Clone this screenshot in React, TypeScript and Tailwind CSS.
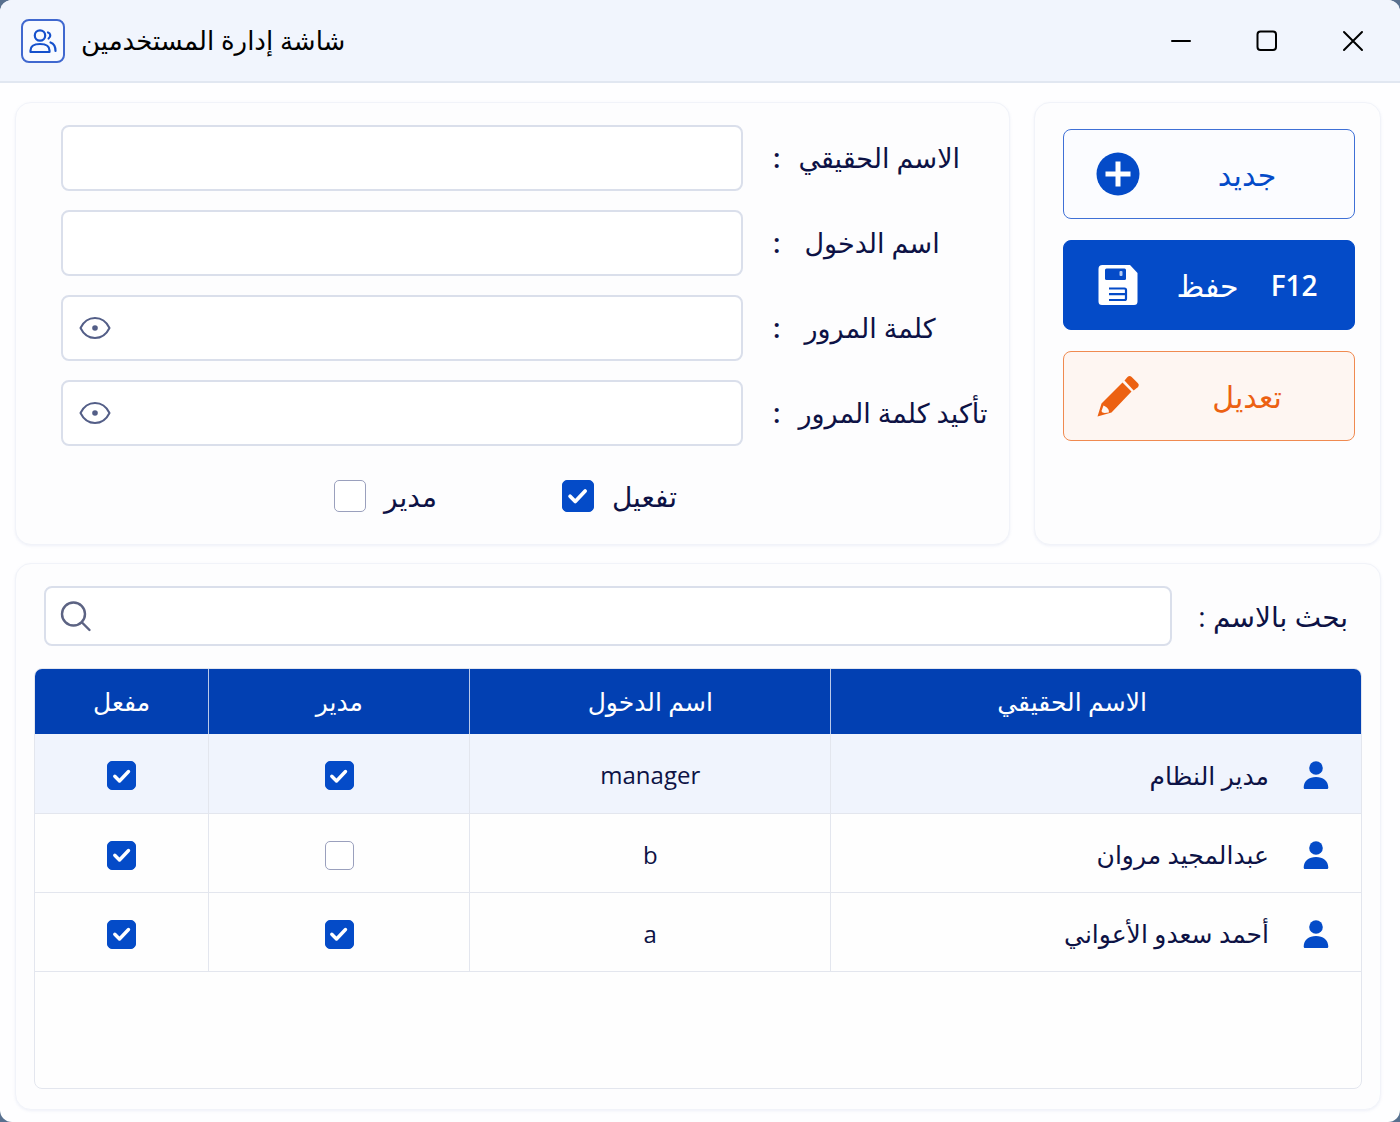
import { useState, type ReactNode } from "react";
import clsx from "clsx";

interface User {
    id: number;
    name: string;
    login: string;
    admin: boolean;
    active: boolean;
}

const initialUsers: User[] = [
    { id: 1, name: "مدير النظام", login: "manager", admin: true, active: true },
    { id: 2, name: "عبدالمجيد مروان", login: "b", admin: false, active: true },
    { id: 3, name: "أحمد سعدو الأعواني", login: "a", admin: true, active: true },
];

const fields = [
    { id: "realName", label: "الاسم الحقيقي", password: false, gap: "gap-[18px]" },
    { id: "loginName", label: "اسم الدخول", password: false, gap: "gap-6" },
    { id: "password", label: "كلمة المرور", password: true, gap: "gap-6" },
    { id: "confirm", label: "تأكيد كلمة المرور", password: true, gap: "gap-[18px]" },
];

function UsersLogo() {
    return (
        <svg viewBox="0 0 28 26" className="h-[26px] w-7" fill="none" stroke="#1550cc" strokeWidth="2.200" strokeLinecap="round" strokeLinejoin="round">
            <circle cx="11" cy="7.500" r="5.200" />
            <path d="M1.500 24v-1.500c0-4.500 3.800-6.500 9.500-6.500s9.500 2 9.500 6.500v1.500z" />
            <path d="M19 4.500c2.600 .8 3.200 4 .6 6" />
            <path d="M21.500 14.500c3.500 1.200 5 4 5 8.500" />
        </svg>
    );
}

function PlusIcon() {
    return (
        <svg viewBox="0 0 44 44" className="size-11">
            <circle cx="22" cy="22" r="21.500" fill="#044bc8" />
            <path d="M22 12v20M12 22h20" stroke="#fff" strokeWidth="5" strokeLinecap="square" strokeLinejoin="round" />
        </svg>
    );
}

function SaveIcon() {
    return (
        <svg viewBox="0 0 44 44" className="size-11">
            <path d="M6.500 2H34l7.500 8v28.500a3.500 3.500 0 0 1-3.500 3.500H6a3.500 3.500 0 0 1-3.500-3.500V6a4 4 0 0 1 4-4z" fill="#fff" />
            <rect x="9" y="5.500" width="21" height="11.500" rx="1.500" fill="#044bc8" />
            <rect x="23.500" y="8" width="3" height="5" rx="1" fill="#b5cdf3" />
            <path d="M13 25.500h15.500q1.500 0 1.500 1.500v8.500q0 1.500-1.500 1.500H13M13 31.200h17" fill="none" stroke="#044bc8" strokeWidth="2.200" />
        </svg>
    );
}

function PencilIcon() {
    return (
        <svg viewBox="0 0 44 44" className="size-11" fill="#ec6112">
            <path d="M26.500 8.500 35.500 17.500 15.500 38.500 1.500 42.500 5.500 29.500zM7.500 31.500 5.500 37C6 39 8 39.500 12.800 38.500 13.500 36 11.500 33 7.500 31.500z" fillRule="evenodd" />
            <path d="m28.500 6.500 3-3.500a3 3 0 0 1 4.200 0l6 6a3 3 0 0 1 0 4.200l-4 3.300z" />
        </svg>
    );
}

function EyeIcon() {
    return (
        <svg viewBox="0 0 32 24" className="h-6 w-8" fill="none" stroke="#535e87" strokeWidth="2" strokeLinejoin="round">
            <path d="M1.500 12C8-1.300 24-1.300 30.500 12 24 25.300 8 25.300 1.500 12z" />
            <circle cx="16" cy="12" r="2.800" fill="#535e87" stroke="none" />
        </svg>
    );
}

function SearchIcon() {
    return (
        <svg viewBox="0 0 32 32" className="size-8" fill="none" stroke="#5c6383" strokeWidth="2.400" strokeLinecap="round">
            <circle cx="13.500" cy="14" r="11.500" />
            <path d="m22 22.500 7.500 7.500" />
        </svg>
    );
}

function PersonIcon() {
    return (
        <svg viewBox="0 0 26 28" className="h-7 w-[26px] shrink-0" fill="#044bc8">
            <circle cx="13" cy="7" r="6.800" />
            <path d="M.7 26.500C.7 20 6 16 13 16s12.300 4 12.300 10.500c0 .9-.4 1.500-1.300 1.500H2c-.9 0-1.300-.6-1.300-1.500z" />
        </svg>
    );
}

interface CheckBoxProps {
    checked: boolean;
    onChange: () => void;
    large?: boolean;
    label?: string;
}

function CheckBox({ checked, onChange, large = false, label }: CheckBoxProps) {
    return (
        <span className={clsx("inline-grid place-items-center align-middle", large ? "size-8" : "size-[29px]")}>
            <input
                type="checkbox"
                checked={checked}
                onChange={onChange}
                aria-label={label}
                className="col-start-1 row-start-1 size-full cursor-pointer appearance-none rounded-[5px] border border-[#9aa0bd] bg-white checked:border-[#044bc8] checked:bg-[#044bc8]"
            />
            {checked && (
                <svg viewBox="0 0 20 20" className={clsx("pointer-events-none col-start-1 row-start-1", large ? "size-[22px]" : "size-5")} fill="none" stroke="#fff" strokeWidth="3.400" strokeLinecap="round" strokeLinejoin="round">
                    <path d="m2.800 10.200 4.700 4.800 9-9.500" />
                </svg>
            )}
        </span>
    );
}

function ActionButton({ icon, className, children }: { icon: ReactNode; className: string; children: ReactNode }) {
    return (
        <button type="button" className={clsx("flex h-[90px] items-center rounded-lg border pl-8 text-[30px]", className)}>
            <span className="flex flex-1 items-center justify-center gap-8">{children}</span>
            {icon}
        </button>
    );
}

const card = "rounded-2xl border border-[#f1f3f9] bg-[#fdfdfe] shadow-[0_1px_3px_rgba(100,120,190,0.1)]";
const input = "w-full rounded-lg border-2 border-[#dadfeb] bg-white px-4 text-2xl outline-none focus:border-[#044bc8]";

export default function App() {
    const [users, setUsers] = useState(initialUsers);
    const [active, setActive] = useState(true);
    const [admin, setAdmin] = useState(false);
    const [visible, setVisible] = useState<Record<string, boolean>>({});

    const toggle = (id: number, key: "admin" | "active") => {
        setUsers((prev) => prev.map((u) => (u.id === id ? { ...u, [key]: !u[key] } : u)));
    };

    return (
        <div className="min-h-screen bg-[#58708f] font-['Open_Sans','DejaVu_Sans',sans-serif] text-[#0d1245]">
            <div className="flex min-h-screen flex-col overflow-hidden rounded-xl bg-[#fefeff]">
                <header className="flex h-[83px] items-center border-b-2 border-[#e1e7f1] bg-[#f1f5fd] pr-[34px] pl-[21px]">
                    <span className="flex size-11 items-center justify-center rounded-lg border-2 border-[#4068cf] bg-[#f8faff]">
                        <UsersLogo />
                    </span>
                    <h1 dir="rtl" className="ml-4 text-[26px] font-medium text-black">شاشة إدارة المستخدمين</h1>
                    <div className="ml-auto flex gap-[60px] text-black">
                        <button type="button" aria-label="تصغير">
                            <svg viewBox="0 0 26 26" className="size-[26px]" stroke="currentColor" strokeWidth="2" strokeLinecap="round">
                                <path d="M4 13h18" />
                            </svg>
                        </button>
                        <button type="button" aria-label="تكبير">
                            <svg viewBox="0 0 26 26" className="size-[26px]" fill="none" stroke="currentColor" strokeWidth="2">
                                <rect x="3.500" y="3.500" width="18.500" height="18.500" rx="3" />
                            </svg>
                        </button>
                        <button type="button" aria-label="إغلاق">
                            <svg viewBox="0 0 26 26" className="size-[26px]" stroke="currentColor" strokeWidth="2" strokeLinecap="round">
                                <path d="m4 4 18 18M22 4 4 22" />
                            </svg>
                        </button>
                    </div>
                </header>

                <main dir="rtl" className="flex flex-1 flex-col gap-[18px] pt-[19px] pr-[19px] pb-3 pl-[15px]">
                    <div className="flex gap-6">
                        <section className={clsx(card, "flex w-[347px] shrink-0 flex-col gap-[21px] pt-[26px] pr-[25px] pl-7")}>
                            <ActionButton icon={<PlusIcon />} className="border-[#3f70d6] bg-[#fbfcff] text-[#044bc8]">جديد</ActionButton>
                            <ActionButton icon={<SaveIcon />} className="border-[#044bc8] bg-[#044bc8] text-white">
                                <span className="text-[28px] font-semibold">F12</span>
                                <span>حفظ</span>
                            </ActionButton>
                            <ActionButton icon={<PencilIcon />} className="border-[#f08a50] bg-[#fef6f2] text-[#ec6112]">تعديل</ActionButton>
                        </section>

                        <form className={clsx(card, "flex flex-1 flex-col gap-[19px] pt-[22px] pr-5 pb-8 pl-[45px]")}>
                            {fields.map((field) => (
                                <div key={field.id} className="flex items-center">
                                    <label htmlFor={field.id} className={clsx("flex w-[216px] shrink-0 justify-end text-[27px] whitespace-nowrap", field.gap)}>
                                        <span>{field.label}</span>
                                        <span className="font-semibold">:</span>
                                    </label>
                                    <div className="relative mr-[30px] flex-1">
                                        <input
                                            id={field.id}
                                            type={field.password && !visible[field.id] ? "password" : "text"}
                                            className={clsx(input, "h-[66px]")}
                                        />
                                        {field.password && (
                                            <button
                                                type="button"
                                                aria-label="إظهار كلمة المرور"
                                                onClick={() => setVisible((prev) => ({ ...prev, [field.id]: !prev[field.id] }))}
                                                className="absolute inset-y-0 left-[18px]"
                                            >
                                                <EyeIcon />
                                            </button>
                                        )}
                                    </div>
                                </div>
                            ))}
                            <div className="mt-[15px] flex gap-[125px] pr-[312px]">
                                <label className="flex h-8 items-center gap-[18px] text-[28px]">
                                    تفعيل
                                    <CheckBox large checked={active} onChange={() => setActive(!active)} />
                                </label>
                                <label className="flex h-8 items-center gap-[18px] text-[28px]">
                                    مدير
                                    <CheckBox large checked={admin} onChange={() => setAdmin(!admin)} />
                                </label>
                            </div>
                        </form>
                    </div>

                    <section className={clsx(card, "flex flex-1 flex-col gap-[22px] px-[18px] pt-[22px] pb-5")}>
                        <div className="flex items-center pr-[14px] pl-[10px]">
                            <label htmlFor="search" className="shrink-0 text-[28px]">بحث بالاسم :</label>
                            <div className="relative mr-[26px] flex-1">
                                <input id="search" type="text" className={clsx(input, "h-[60px] pl-16")} />
                                <span className="pointer-events-none absolute inset-y-0 left-4 flex items-center">
                                    <SearchIcon />
                                </span>
                            </div>
                        </div>

                        <div className="flex-1 overflow-hidden rounded-lg border border-[#e3e6ee] bg-[#fefefe]">
                            <table className="w-full table-fixed border-collapse text-center text-[25px]">
                                <thead>
                                    <tr className="h-[65px] bg-[#0240b2] text-white">
                                        <th scope="col" className="w-[40%] border-l border-[#b9c9ea] pr-12 font-medium">الاسم الحقيقي</th>
                                        <th scope="col" className="w-[27.200%] border-l border-[#b9c9ea] font-medium">اسم الدخول</th>
                                        <th scope="col" className="w-[19.700%] border-l border-[#b9c9ea] font-medium">مدير</th>
                                        <th scope="col" className="font-medium">مفعل</th>
                                    </tr>
                                </thead>
                                <tbody>
                                    {users.map((user, i) => (
                                        <tr key={user.id} className={clsx("h-[79px] border-b border-[#e3e6ee]", i === 0 && "bg-[#f0f4fd]")}>
                                            <td className="border-l border-[#e3e6ee] pt-1 pr-8">
                                                <span className="flex items-center gap-[34px]">
                                                    <PersonIcon />
                                                    {user.name}
                                                </span>
                                            </td>
                                            <td className="border-l border-[#e3e6ee] pt-1 text-2xl">{user.login}</td>
                                            <td className="border-l border-[#e3e6ee]">
                                                <CheckBox label={`مدير ${user.name}`} checked={user.admin} onChange={() => toggle(user.id, "admin")} />
                                            </td>
                                            <td>
                                                <CheckBox label={`مفعل ${user.name}`} checked={user.active} onChange={() => toggle(user.id, "active")} />
                                            </td>
                                        </tr>
                                    ))}
                                </tbody>
                            </table>
                        </div>
                    </section>
                </main>
            </div>
        </div>
    );
}
